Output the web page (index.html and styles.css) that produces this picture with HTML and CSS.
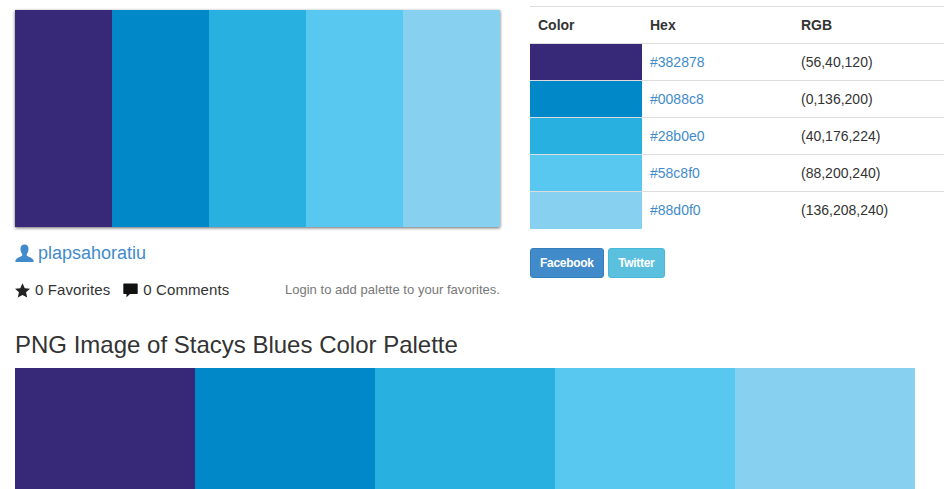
FILE: index.html
```html
<!DOCTYPE html>
<html lang="en">
<head>
  <meta charset="UTF-8" />
  <meta name="viewport" content="width=device-width, initial-scale=1.0"/>
  <title>Stacys Blues Color Palette</title>
  <link rel="stylesheet" href="styles.css">
</head>
<body>

<div class="top">
  <div class="left">
    <div class="palette">
      <div class="c1"></div>
      <div class="c2"></div>
      <div class="c3"></div>
      <div class="c4"></div>
      <div class="c5"></div>
    </div>

    <div class="author">
      <svg class="user-icon" width="19" height="19" viewBox="0 0 19 19"><path d="M9.5 0.5C6.6 0.5 5.3 2.7 5.5 5.2c.1 1.700.6 3.400 1.500 4.600.4.600.4 1.400 0 1.900-.9 1-5.500 1.800-6.500 4.600-.2.600-.1 1.200 0 1.700h18c.1-.5.2-1.100 0-1.700-1-2.800-5.600-3.600-6.500-4.600-.4-.5-.4-1.300 0-1.900.9-1.200 1.400-2.900 1.500-4.600.2-2.500-1.100-4.700-4-4.700z"/></svg>
      <a href="#">plapsahoratiu</a>
    </div>

    <div class="stats">
      <svg class="stat-icon" width="15" height="15" viewBox="0 0 14 14"><path d="M7 0.200l2.100 4.600 4.900.5-3.700 3.300 1.100 5L7 11.100l-4.400 2.500 1.100-5L0 5.300l4.900-.5z"/></svg>
      <span class="stat">0 Favorites</span>
      <svg class="stat-icon comment" width="15" height="15" viewBox="0 0 15 15"><path d="M1 .5h13c.4 0 .7.300.7.700v9c0 .4-.3.700-.7.700H7l-3.500 3.300V11H1c-.4 0-.7-.3-.7-.7v-9C.3.800.6.500 1 .5z"/></svg>
      <span class="stat">0 Comments</span>
      <span class="login">Login to add palette to your favorites.</span>
    </div>
  </div>

  <div class="right">
    <table>
      <thead>
        <tr><th class="col-color">Color</th><th class="col-hex">Hex</th><th>RGB</th></tr>
      </thead>
      <tbody>
        <tr><td class="swatch c1"></td><td><a href="#">#382878</a></td><td>(56,40,120)</td></tr>
        <tr><td class="swatch c2"></td><td><a href="#">#0088c8</a></td><td>(0,136,200)</td></tr>
        <tr><td class="swatch c3"></td><td><a href="#">#28b0e0</a></td><td>(40,176,224)</td></tr>
        <tr><td class="swatch c4"></td><td><a href="#">#58c8f0</a></td><td>(88,200,240)</td></tr>
        <tr><td class="swatch c5"></td><td><a href="#">#88d0f0</a></td><td>(136,208,240)</td></tr>
      </tbody>
    </table>

    <div class="share">
      <a class="btn btn-fb" href="#">Facebook</a>
      <a class="btn btn-tw" href="#">Twitter</a>
    </div>
  </div>
</div>

<h2>PNG Image of Stacys Blues Color Palette</h2>
<div class="strip">
  <div class="c1"></div>
  <div class="c2"></div>
  <div class="c3"></div>
  <div class="c4"></div>
  <div class="c5"></div>
</div>

</body>
</html>
```

FILE: styles.css
```css
html, body {
  height: 489px;
  overflow: hidden;
}
body {
  font-family: "Liberation Sans", Arial, sans-serif;
  font-size: 14px;
  line-height: 20px;
  color: #333;
  background: #fff;
  margin: 0;
  padding: 0;
}
a {
  color: #428bca;
  text-decoration: none;
}

.c1 { background: #382878; }
.c2 { background: #0088c8; }
.c3 { background: #28b0e0; }
.c4 { background: #58c8f0; }
.c5 { background: #88d0f0; }

.top {
  display: flex;
  padding: 6px 0 0 15px;
}
.left {
  width: 485px;
  padding-top: 4px;
}
.right {
  width: 414px;
  margin-left: 30px;
}

.palette {
  display: flex;
  height: 217px;
  box-shadow: 0 1px 3px rgba(0, 0, 0, 0.6);
}
.palette div {
  flex: 1;
}

.author {
  display: flex;
  align-items: center;
  margin-top: 15px;
  height: 22px;
  font-size: 18px;
}
.user-icon {
  fill: #428bca;
  margin-right: 4px;
}

.stats {
  display: flex;
  align-items: center;
  margin-top: 16px;
  height: 20px;
  font-size: 15px;
  letter-spacing: 0.1px;
}
.stat-icon {
  fill: #222;
  margin-right: 5px;
}
.comment {
  fill: #111;
  margin-left: 13px;
  margin-right: 5px;
}
.login {
  margin-left: auto;
  font-size: 13px;
  letter-spacing: 0.03px;
  color: #777;
}

table {
  width: 414px;
  border-collapse: collapse;
  table-layout: fixed;
}
th, td {
  border-top: 1px solid #ddd;
  padding: 8px;
  text-align: left;
  box-sizing: border-box;
  height: 37px;
}
th {
  font-weight: bold;
  font-size: 14px;
}
.col-color { width: 112px; }
.col-hex { width: 151px; }
.swatch {
  padding: 0;
}

.share {
  display: flex;
  gap: 4px;
  margin-top: 19px;
}
.btn {
  display: block;
  height: 30px;
  box-sizing: border-box;
  padding: 0 9.5px;
  font-size: 12px;
  font-weight: bold;
  letter-spacing: -0.3px;
  line-height: 28px;
  color: #fff;
  border: 1px solid;
  border-radius: 3px;
}
.btn-fb {
  padding: 0 9px;
  background: #428bca;
  border-color: #357ebd;
}
.btn-tw {
  background: #5bc0de;
  border-color: #46b8da;
}

h2 {
  font-size: 24px;
  font-weight: normal;
  line-height: 26px;
  margin: 0;
  padding: 32px 0 10px 15px;
}
.strip {
  display: flex;
  width: 900px;
  height: 121px;
  margin-left: 15px;
}
.strip div {
  flex: 1;
}
```
